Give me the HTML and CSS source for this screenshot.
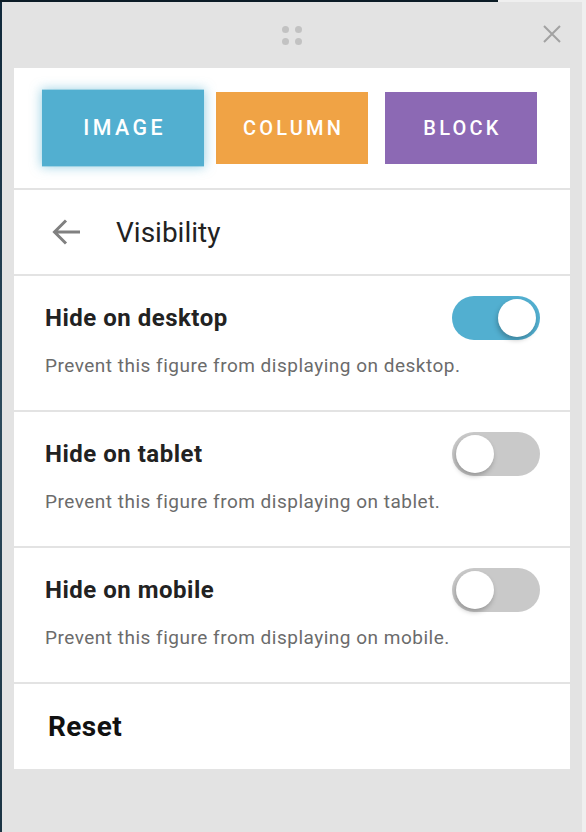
FILE: index.html
```html
<!DOCTYPE html>
<html lang="en">
<head>
<meta charset="utf-8">
<title>Visibility</title>
<link rel="stylesheet" href="styles.css">
</head>
<body>
<div class="panel">
  <div class="panel-header">
    <span class="spacer"></span>
    <div class="drag-handle" aria-hidden="true">
      <span class="dot"></span><span class="dot"></span>
      <span class="dot"></span><span class="dot"></span>
    </div>
    <button class="close" aria-label="Close">
      <svg width="18" height="18" viewBox="0 0 18 18"><path d="M1 1L17 17M17 1L1 17" stroke="#a2a2a2" stroke-width="2" fill="none"/></svg>
    </button>
  </div>
  <div class="card">
    <div class="tabs">
      <button class="tab tab-image active">IMAGE</button>
      <button class="tab tab-column">COLUMN</button>
      <button class="tab tab-block">BLOCK</button>
    </div>
    <div class="title-row">
      <svg class="back" width="28" height="28" viewBox="0 0 28 28"><path d="M28 14H3M14 2.5L2.5 14L14 25.5" stroke="#808080" stroke-width="3" fill="none"/></svg>
      <span class="title">Visibility</span>
    </div>
    <div class="option">
      <div class="option-head">
        <span class="option-title">Hide on desktop</span>
        <span class="toggle on"><span class="knob"></span></span>
      </div>
      <p class="option-desc">Prevent this figure from displaying on desktop.</p>
    </div>
    <div class="option">
      <div class="option-head">
        <span class="option-title">Hide on tablet</span>
        <span class="toggle"><span class="knob"></span></span>
      </div>
      <p class="option-desc">Prevent this figure from displaying on tablet.</p>
    </div>
    <div class="option">
      <div class="option-head">
        <span class="option-title">Hide on mobile</span>
        <span class="toggle"><span class="knob"></span></span>
      </div>
      <p class="option-desc">Prevent this figure from displaying on mobile.</p>
    </div>
    <div class="reset-row">
      <span class="reset">Reset</span>
    </div>
  </div>
</div>
</body>
</html>
```
FILE: styles.css
```css
* { box-sizing: border-box; }
html, body { height: 100%; }
body {
  margin: 0;
  font-family: Roboto, "Noto Sans", Arial, sans-serif;
  background:
    linear-gradient(#0c1c26, #0c1c26) 0 0 / 498px 2px no-repeat,
    linear-gradient(to bottom, #10283a, #2c4a5c 50%, #1c3444) 0 0 / 2px 100% no-repeat,
    #efefef;
  overflow: hidden;
}
.panel {
  margin: 2px 4px 0 2px;
  height: 830px;
  background: #e3e3e3;
  display: flex;
  flex-direction: column;
}
.panel-header {
  height: 66px;
  display: grid;
  grid-template-columns: 1fr auto 1fr;
  align-items: center;
}
.drag-handle {
  display: grid;
  grid-template-columns: 7px 7px;
  gap: 5px 5.5px;
}
.dot {
  width: 7px;
  height: 7px;
  border-radius: 50%;
  background: #c2c2c2;
}
.close {
  justify-self: end;
  margin-right: 21px;
  margin-top: -2px;
  padding: 0;
  border: 0;
  background: none;
  width: 18px;
  height: 18px;
  display: block;
}
.close svg { display: block; }
.card {
  margin: 0 12px;
  background: #fff;
}
.tabs {
  display: flex;
  gap: 17px;
  padding: 24px 32px 24px 33px;
}
.tab {
  flex: 0 0 152px;
  height: 72px;
  border: 0;
  color: #fff;
  font-family: Roboto, "Noto Sans", Arial, sans-serif;
  font-size: 20px;
  font-weight: 500;
  letter-spacing: 3.2px;
  padding: 0 0 0 3px;
}
.tab-image { background: #52afd0; }
.tab-column { background: #f0a345; }
.tab-block { background: #8c69b4; }
.tab.active {
  transform: scale(1.066);
  box-shadow: 0 0 10px 1px rgba(82, 175, 208, 0.55);
}
.title-row {
  height: 86px;
  border-top: 2px solid #e3e3e3;
  display: flex;
  align-items: center;
  padding-left: 38px;
  gap: 36px;
}
.back { display: block; }
.title {
  font-size: 28px;
  color: #222;
}
.option {
  border-top: 2px solid #e3e3e3;
  height: 136px;
  padding: 20px 30px 0 31px;
}
.option-head {
  height: 44px;
  display: flex;
  align-items: center;
  justify-content: space-between;
}
.option-title {
  font-size: 24px;
  font-weight: 700;
  letter-spacing: 0.5px;
  color: #222;
}
.option-desc {
  margin: 14px 0 0;
  font-size: 19px;
  line-height: 24px;
  letter-spacing: 0.5px;
  color: #6b6b6b;
}
.toggle {
  position: relative;
  width: 88px;
  height: 44px;
  border-radius: 22px;
  background: #c9c9c9;
}
.toggle.on { background: #52afd0; }
.knob {
  position: absolute;
  top: 3px;
  left: 4px;
  width: 38px;
  height: 38px;
  border-radius: 50%;
  background: #fff;
  box-shadow: -1px 3px 5px rgba(0, 0, 0, 0.25);
}
.toggle.on .knob { left: 46px; }
.reset-row {
  border-top: 2px solid #e3e3e3;
  height: 87px;
  display: flex;
  align-items: center;
  padding-left: 34px;
}
.reset {
  font-size: 28px;
  font-weight: 700;
  letter-spacing: 0.4px;
  color: #111;
}
```
